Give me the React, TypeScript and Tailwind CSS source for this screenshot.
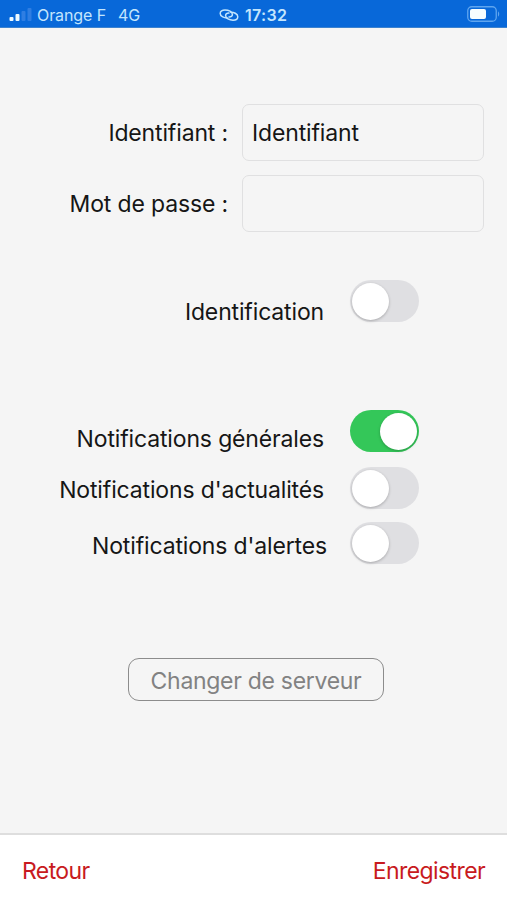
import { useState } from "react";
import clsx from "clsx";

function StatusBar() {
  return (
    <header className="grid h-7 shrink-0 grid-cols-[210px_1fr_50px] items-center border-b border-[#3c82cf] bg-[#0868d9] text-[#c3e5fd]">
      <div className="flex items-center pl-[9px] pt-0.5 text-[16px] leading-5">
        <svg viewBox="0 0 23 15" className="mr-[5px] h-[15px] w-[23px]" aria-hidden>
          <rect x="0.5" y="10" width="4" height="4" rx="1" fill="#eefaff" />
          <rect x="6.5" y="7" width="4" height="7" rx="1" fill="#eefaff" />
          <rect x="12.5" y="4" width="4" height="10" rx="1" fill="#2f7ee2" />
          <rect x="18.5" y="1" width="4" height="13" rx="1" fill="#2f7ee2" />
        </svg>
        <span className="w-[81px] whitespace-nowrap tracking-[-0.1px]">Orange F</span>
        <span>4G</span>
      </div>
      <div className="flex items-center pl-[9px] pt-0.5">
        <svg viewBox="0 0 20 14" className="mr-[6px] h-[14px] w-5" fill="none" stroke="currentColor" strokeWidth="1.5" strokeLinecap="round" aria-hidden>
          <path d="M8.2 9.9C5.6 10 1.2 8.6 1.2 5.4 1.2 3.2 3.4 2 6 2c3.600 0 7.400 1.700 7.400 4.500 0 1.700-1.500 2.700-3.400 2.600" />
          <path d="M11.800 4.200c2.600-.1 7 1.300 7 4.500 0 2.200-2.200 3.500-4.800 3.500-3.600 0-7.400-1.800-7.400-4.600 0-1.700 1.500-2.700 3.400-2.600" />
        </svg>
        <span className="text-[16px] font-semibold leading-5 tracking-[0.3px]">17:32</span>
      </div>
      <svg viewBox="0 0 33 16" className="ml-[10px] h-4 w-[33px]" aria-hidden>
        <rect x="0.75" y="0.75" width="28.5" height="14.5" rx="4" fill="none" stroke="#5fa5ef" strokeWidth="1.3" />
        <rect x="3" y="3" width="16" height="10" rx="2" fill="#f6fdff" />
        <path d="M31 5.5c1.6.6 1.6 4.4 0 5z" fill="#5fa5ef" />
      </svg>
    </header>
  );
}

function Field({ label, value, type = "text" }: { label: string; value: string; type?: string }) {
  return (
    <label className="flex h-[57px] items-center justify-end">
      <span className="mr-[14px] whitespace-nowrap pt-[2px]">{label}</span>
      <input
        type={type}
        defaultValue={value}
        className="h-full w-[242px] rounded-[7px] border-[1.5px] border-[#e0e0e1] bg-[#f5f5f5] pl-[9px] pr-2 pt-px tracking-[-0.15px] outline-none"
      />
    </label>
  );
}

function Toggle({
  label,
  initial = false,
  className,
  labelClass,
}: {
  label: string;
  initial?: boolean;
  className?: string;
  labelClass: string;
}) {
  const [on, setOn] = useState(initial);

  return (
    <div className={clsx("flex h-[42px] items-start justify-end pr-[88px]", className)}>
      <span className={clsx("whitespace-nowrap leading-7", labelClass)}>{label}</span>
      <button
        type="button"
        role="switch"
        aria-checked={on}
        aria-label={label}
        onClick={() => setOn(!on)}
        className={clsx(
          "flex h-[42px] w-[69px] shrink-0 items-center rounded-full px-[2px]",
          on ? "justify-end bg-[#34c759]" : "justify-start bg-[#dfdfe2]"
        )}
      >
        <span className="size-[37px] rounded-full bg-white shadow-[0_1px_3px_rgba(0,0,0,0.25)]" />
      </button>
    </div>
  );
}

export default function App() {
  return (
    <div className="flex h-[900px] w-[507px] flex-col bg-[#f5f5f5] font-['Inter',sans-serif] text-[23px] tracking-[-0.15px] text-[#161616]">
      <StatusBar />

      <main className="flex flex-1 flex-col pt-[76px]">
        <div className="flex flex-col gap-[14px] pr-[23px]">
          <Field label="Identifiant :" value="Identifiant" />
          <Field label="Mot de passe :" value="" type="password" />
        </div>

        <Toggle label="Identification" className="mt-12" labelClass="mt-[18px] mr-[26px]" />

        {/* Notifications */}
        <Toggle label="Notifications générales" initial className="mt-[88px]" labelClass="mt-[15px] mr-[26px]" />
        <Toggle label="Notifications d'actualités" className="mt-[15px]" labelClass="mt-[9px] mr-[26px]" />
        <Toggle label="Notifications d'alertes" className="mt-[13px]" labelClass="mt-[10px] mr-[23px]" />

        <button
          type="button"
          className="ml-[128px] mt-[94px] h-[43px] w-[256px] rounded-[11px] border-[1.5px] border-[#8c8c8c] pt-[3px] tracking-[-0.3px] text-[#828282]"
        >
          Changer de serveur
        </button>
      </main>

      <footer className="flex h-[67px] shrink-0 items-center justify-between border-t-2 border-[#dedede] bg-white px-[22px] pt-2 text-[#c81a20]">
        <button type="button" className="tracking-[-0.6px]">Retour</button>
        <button type="button" className="tracking-[-0.6px]">Enregistrer</button>
      </footer>
    </div>
  );
}
